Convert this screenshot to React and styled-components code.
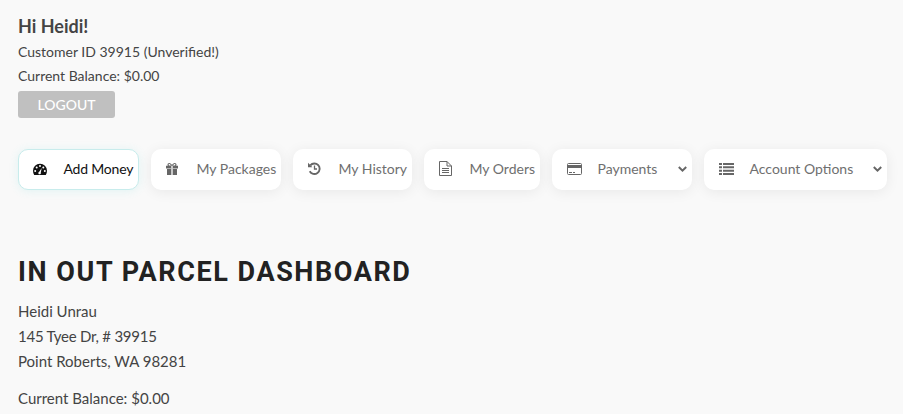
import React from "react";
import styled, { createGlobalStyle } from "styled-components";

const Global = createGlobalStyle`
  html, body { margin: 0; padding: 0; background: #f9f9f9; overflow: hidden; }
  body { font-family: Lato, "Noto Sans", sans-serif; color: #444; }
`;
const Page = styled.div`
  width: 903px; height: 414px; box-sizing: border-box; padding: 12px 16px 0 18px; overflow: hidden;
`;
const Greeting = styled.h3`
  margin: 0; font-size: 18px; line-height: 28px; font-weight: 700; color: #444;
`;
const InfoLine = styled.p`
  margin: 0; font-size: 14px; line-height: 24px; color: #444;
`;
const Logout = styled.button`
  display: block; width: 97px; height: 27px; margin-top: 3px; padding: 0; border: 0; border-radius: 3px;
  background: #c0c0c0; color: #fff; font: 500 14px Lato, sans-serif;
`;
const Nav = styled.nav`
  display: flex; gap: 12px; margin-top: 31px;
`;
const Tab = styled.div`
  box-sizing: border-box; width: ${p => p.$w}px; height: 41px; display: flex; align-items: center;
  padding: 0 0 2px ${p => p.$active ? 14 : 15}px; border-radius: 10px; background: #fff; font-size: 14px;
  color: ${p => p.$active ? "#111" : "#6f6f6f"};
  border: ${p => p.$active ? "1px solid #c8ecec" : "0"};
  box-shadow: ${p => p.$active ? "0 1px 10px rgba(80,210,210,.14)" : "0 2px 14px rgba(0,0,0,.07)"};
  white-space: nowrap;
`;
const IconBox = styled.span`
  display: flex; width: 30.5px; flex: none; color: ${p => p.$active ? "#111" : "#666"};
`;
const Label = styled.span`
  letter-spacing: ${p => p.$tight ? "-0.2px" : "0"};
`;
const Caret = styled.span`
  display: flex; margin-left: auto; margin-right: 5px; color: #666;
`;
const Title = styled.h1`
  margin: 64px 0 0; font: 700 27px/36px Roboto, sans-serif; letter-spacing: 1.57px; color: #222;
`;
const Address = styled.div`
  margin-top: 9px;
`;
const AddressLine = styled.div`
  font-size: 15px; line-height: 25px; color: #444;
  letter-spacing: ${p => p.$tight ? "-0.25px" : "0"};
`;
const Balance = styled.p`
  margin: 12px 0 0; font-size: 15px; line-height: 25px; color: #444;
`;

const Gauge = () => (
  <svg width="14" height="12" viewBox="0 0 14 12">
    <path fill="currentColor" fillRule="evenodd" d="M1.2 12C.4 10.8 0 9.4 0 7.8a7 7 0 0 1 14 0c0 1.6-.4 3-1.2 4.2ZM2.2 7.1a1 1 0 1 0 0 2 1 1 0 0 0 0-2ZM3.7 3.6a1 1 0 1 0 0 2 1 1 0 0 0 0-2ZM7 2a1 1 0 1 0 0 2 1 1 0 0 0 0-2ZM10.3 3.6a1 1 0 1 0 0 2 1 1 0 0 0 0-2ZM11.8 7.1a1 1 0 1 0 0 2 1 1 0 0 0 0-2ZM8.7 5 6.2 8.7a1.3 1.3 0 1 0 1.6.7Z" />
  </svg>
);
const Gift = () => (
  <svg width="12" height="12" viewBox="0 0 12 12">
    <path fill="currentColor" fillRule="evenodd" d="M3.3 0C2.2 0 1.5.8 1.5 1.7c0 .4.1.8.4 1.1H0v2.6h5V2.8h2v2.6h5V2.8h-1.900c.3-.3.4-.7.4-1.100C10.500.8 9.800 0 8.700 0 7.600 0 6.500 1 6 2 5.500 1 4.400 0 3.300 0ZM3.300 1.100c.7 0 1.400.7 1.700 1.500H3.300c-.5 0-.7-.4-.7-.8s.2-.7.7-.7ZM8.700 1.100c.5 0 .7.300.7.700s-.2.8-.7.8H7c.3-.8 1-1.500 1.700-1.500Z" />
    <path fill="currentColor" d="M1 6h4v6H1ZM7 6h4v6H7Z" />
    <path fill="currentColor" opacity=".35" d="M5 2.800h2V12H5Z" />
  </svg>
);
const History = () => (
  <svg width="13" height="13" viewBox="0 0 13 13" fill="none" stroke="currentColor">
    <path strokeWidth="1.9" d="M2.300 3.300A5.300 5.300 0 1 1 1.700 9.300" />
    <path fill="currentColor" stroke="none" d="M0 .8V5.200H4.400Z" />
    <path strokeWidth="1.300" d="M6.500 3.400V7H9" />
  </svg>
);
const FileDoc = () => (
  <svg width="13" height="15" viewBox="0 0 13 15" fill="none" stroke="currentColor">
    <path d="M.5.500H8L12.500 5V14.500H.5Z" />
    <path d="M8 .5V5H12.500M3 7.500H10M3 9.500H10M3 11.500H10" />
  </svg>
);
const Card = () => (
  <svg width="15" height="12" viewBox="0 0 15 12">
    <rect x=".5" y=".5" width="14" height="11" rx="1" fill="none" stroke="currentColor" />
    <path fill="currentColor" d="M1 2h13v3H1ZM2 9h3v1H2ZM6 9h2v1H6Z" />
  </svg>
);
const ListIcon = () => (
  <svg width="15" height="12" viewBox="0 0 15 12">
    <path fill="currentColor" d="M0 0h3v2H0ZM4 0h11v2H4ZM0 3.300h3v2H0ZM4 3.300h11v2H4ZM0 6.700h3v2H0ZM4 6.700h11v2H4ZM0 10h3v2H0ZM4 10h11v2H4Z" />
  </svg>
);
const Chevron = () => (
  <svg width="9" height="6" viewBox="0 0 9 6" fill="none" stroke="currentColor" strokeWidth="2">
    <path d="M.8 1 4.500 4.600 8.200 1" />
  </svg>
);

const tabs = [
  { w: 121, label: "Add Money", Icon: Gauge, active: true, tight: true },
  { w: 130, label: "My Packages", Icon: Gift },
  { w: 119, label: "My History", Icon: History },
  { w: 116, label: "My Orders", Icon: FileDoc },
  { w: 140, label: "Payments", Icon: Card, caret: true },
  { w: 183, label: "Account Options", Icon: ListIcon, caret: true },
];

export default function App() {
  return (
    <Page>
      <Global />
      <Greeting>Hi Heidi!</Greeting>
      <InfoLine>Customer ID 39915 (Unverified!)</InfoLine>
      <InfoLine>Current Balance: $0.00</InfoLine>
      <Logout>LOGOUT</Logout>
      <Nav>
        {tabs.map(({ w, label, Icon, active, caret, tight }) => (
          <Tab key={label} $w={w} $active={active}>
            <IconBox $active={active}><Icon /></IconBox>
            <Label $tight={tight}>{label}</Label>
            {caret && <Caret><Chevron /></Caret>}
          </Tab>
        ))}
      </Nav>
      <Title>IN OUT PARCEL DASHBOARD</Title>
      <Address>
        <AddressLine>Heidi Unrau</AddressLine>
        <AddressLine $tight>145 Tyee Dr, # 39915</AddressLine>
        <AddressLine>Point Roberts, WA 98281</AddressLine>
      </Address>
      <Balance>Current Balance: $0.00</Balance>
    </Page>
  );
}
